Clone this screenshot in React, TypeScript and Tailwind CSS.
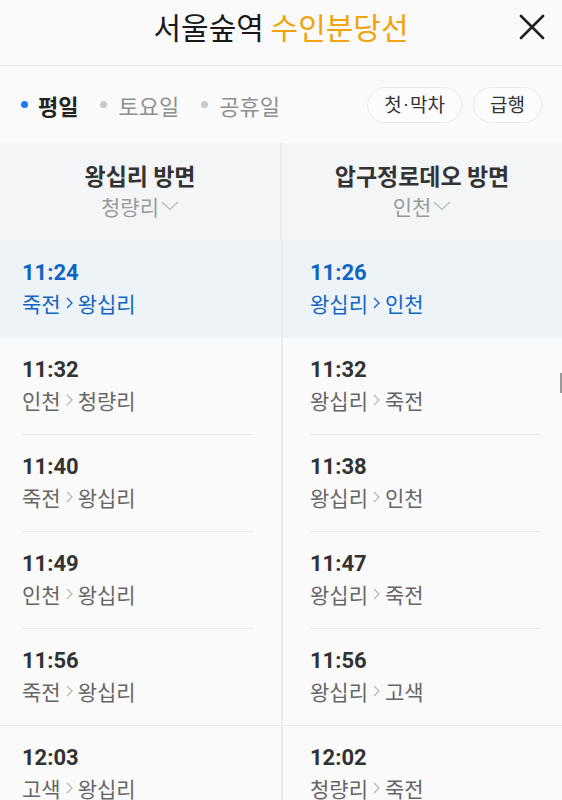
const KR = "font-['Noto_Sans_CJK_KR','Noto_Sans',sans-serif]";

type Row = { t: string; from: string; to: string };

const left: Row[] = [
  { t: "11:24", from: "죽전", to: "왕십리" },
  { t: "11:32", from: "인천", to: "청량리" },
  { t: "11:40", from: "죽전", to: "왕십리" },
  { t: "11:49", from: "인천", to: "왕십리" },
  { t: "11:56", from: "죽전", to: "왕십리" },
  { t: "12:03", from: "고색", to: "왕십리" },
];

const right: Row[] = [
  { t: "11:26", from: "왕십리", to: "인천" },
  { t: "11:32", from: "왕십리", to: "죽전" },
  { t: "11:38", from: "왕십리", to: "인천" },
  { t: "11:47", from: "왕십리", to: "죽전" },
  { t: "11:56", from: "왕십리", to: "고색" },
  { t: "12:02", from: "청량리", to: "죽전" },
];

// 0 = current (highlight), 1 = inset line, 2 = hour line
const kinds = [0, 1, 1, 1, 2, 1];

const Chevron = ({ active }: { active: boolean }) => (
  <svg width="7" height="12" viewBox="0 0 7 12" className="mx-[5px]">
    <polyline
      points="1,1 6,6 1,11"
      fill="none"
      stroke={active ? "#1065c4" : "#b8b8b8"}
      strokeWidth="1.3"
    />
  </svg>
);

const Cell = ({ row, kind, pad }: { row: Row; kind: number; pad: string }) => {
  const active = kind === 0;
  return (
    <div className={`h-full ${pad}`}>
      <div className={`h-full pt-[19px] ${kind === 1 ? "border-b border-[#ececec]" : ""}`}>
        <div
          className={`font-['Roboto','Liberation_Sans',sans-serif] font-bold text-[22px] leading-[26px] ${
            active ? "text-[#1065c4]" : "text-[#333]"
          }`}
        >
          {row.t}
        </div>
        <div
          className={`mt-[3px] flex items-center ${KR} text-[21px] leading-[28px] ${
            active ? "text-[#1065c4]" : "text-[#666]"
          }`}
        >
          <span>{row.from}</span>
          <Chevron active={active} />
          <span>{row.to}</span>
        </div>
      </div>
    </div>
  );
};

const ColHead = ({ title, sub }: { title: string; sub: string }) => (
  <div className={`flex-1 flex flex-col items-center pt-[19px] ${KR}`}>
    <div className="text-[23px] leading-[26px] font-bold text-[#333]">{title}</div>
    <div className="mt-[4px] flex items-center text-[21px] leading-[28px] text-[#9b9b9b]">
      {sub}
      <svg width="18" height="10" viewBox="0 0 18 10" className="ml-[2px]">
        <polyline points="1,1 9,8.5 17,1" fill="none" stroke="#bdbdbd" strokeWidth="1.4" />
      </svg>
    </div>
  </div>
);

export default function App() {
  return (
    <div className={`relative w-[562px] h-[800px] overflow-hidden bg-[#fafafa] ${KR}`}>
      {/* top bar */}
      <div className="relative h-[66px] border-b border-[#e6e6e6] flex items-center justify-center">
        <h1 className="text-[30px] leading-[36px] text-[#1a1a1a] mb-[14px]">
          서울숲역 <span className="text-[#f1a30c]">수인분당선</span>
        </h1>
        <button className="absolute right-[16px] top-[13px] w-[28px] h-[28px] flex items-center justify-center">
          <svg width="26" height="26" viewBox="0 0 26 26">
            <path d="M2 2 L24 24 M24 2 L2 24" stroke="#222" strokeWidth="2.6" strokeLinecap="round" />
          </svg>
        </button>
      </div>

      {/* day tabs */}
      <div className="h-[77px] flex items-center pl-[21px] pr-[20px]">
        <div className="flex items-center text-[22px] leading-[28px]">
          <span className="w-[7px] h-[7px] rounded-full bg-[#1a7cf5] mr-[10px]" />
          <span className="font-bold text-[#222]">평일</span>
          <span className="w-[7px] h-[7px] rounded-full bg-[#c9c9c9] ml-[22px] mr-[11px]" />
          <span className="text-[#8f8f8f]">토요일</span>
          <span className="w-[7px] h-[7px] rounded-full bg-[#c9c9c9] ml-[22px] mr-[11px]" />
          <span className="text-[#8f8f8f]">공휴일</span>
        </div>
        <div className="ml-auto flex gap-[11px]">
          <button className="h-[36px] px-[16px] rounded-full border border-[#ebebeb] bg-[#fcfcfc] text-[19px] text-[#333] flex items-center">
            첫<span className="font-['Liberation_Sans',sans-serif] mx-[1px]">·</span>막차
          </button>
          <button className="h-[36px] px-[16px] rounded-full border border-[#ebebeb] bg-[#fcfcfc] text-[19px] text-[#333] flex items-center">
            급행
          </button>
        </div>
      </div>

      {/* column heads */}
      <div className="flex h-[98px] bg-[#f3f5f7] border-b border-[#eef0f2]">
        <ColHead title="왕십리 방면" sub="청량리" />
        <div className="w-[2px] bg-[#e9ecef]" />
        <ColHead title="압구정로데오 방면" sub="인천" />
      </div>

      {/* timetable rows */}
      {left.map((l, i) => {
        const k = kinds[i];
        return (
          <div
            key={i}
            className={`flex h-[97px] ${k === 0 ? "bg-[#eef3f8]" : ""} ${
              k === 2 ? "border-b border-[#e8ebee]" : ""
            }`}
          >
            <div className="w-[281px]">
              <Cell row={l} kind={k} pad="pl-[22px] pr-[27px]" />
            </div>
            <div className="w-[2px] bg-[#e9ecef]" />
            <div className="flex-1">
              <Cell row={right[i]} kind={k} pad="pl-[27px] pr-[21px]" />
            </div>
          </div>
        );
      })}

      {/* scroll indicator */}
      <div className="absolute right-0 top-[373px] w-[2px] h-[20px] bg-[#9a9a9a]" />
    </div>
  );
}
